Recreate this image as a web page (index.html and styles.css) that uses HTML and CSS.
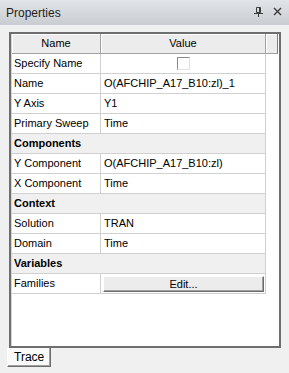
FILE: index.html
```html
<!DOCTYPE html>
<html lang="en">
<head>
  <meta charset="UTF-8" />
  <title>Properties</title>
  <link rel="stylesheet" href="styles.css">
</head>
<body>
  <div class="panel">
    <div class="titlebar">
      <span class="title">Properties</span>
      <div class="title-icons">
        <svg class="pin" width="9" height="10" viewBox="0 0 9 10">
          <path d="M2.5 0.5h4v5h-4z M5.5 0.5v5" fill="none" stroke="#3a3a3a" stroke-width="1"/>
          <path d="M0 6.5h9 M4.5 6.5v3.5" stroke="#3a3a3a" stroke-width="1"/>
        </svg>
        <svg class="close" width="9" height="9" viewBox="0 0 9 9">
          <path d="M1 1L8 8 M8 1L1 8" stroke="#3a3a3a" stroke-width="1.4"/>
        </svg>
      </div>
    </div>

    <div class="frame">
      <div class="grid">
        <div class="head">
          <div class="hcell col-name">Name</div>
          <div class="hcell col-value">Value</div>
          <div class="hcell col-extra"></div>
        </div>

        <div class="row">
          <div class="cell col-name">Specify Name</div>
          <div class="cell col-value center"><span class="checkbox"></span></div>
        </div>
        <div class="row">
          <div class="cell col-name">Name</div>
          <div class="cell col-value">O(AFCHIP_A17_B10:zl)_1</div>
        </div>
        <div class="row">
          <div class="cell col-name">Y Axis</div>
          <div class="cell col-value">Y1</div>
        </div>
        <div class="row">
          <div class="cell col-name">Primary Sweep</div>
          <div class="cell col-value">Time</div>
        </div>
        <div class="row category">
          <div class="cell col-name">Components</div>
          <div class="cell col-value"></div>
        </div>
        <div class="row">
          <div class="cell col-name">Y Component</div>
          <div class="cell col-value">O(AFCHIP_A17_B10:zl)</div>
        </div>
        <div class="row">
          <div class="cell col-name">X Component</div>
          <div class="cell col-value">Time</div>
        </div>
        <div class="row category">
          <div class="cell col-name">Context</div>
          <div class="cell col-value"></div>
        </div>
        <div class="row">
          <div class="cell col-name">Solution</div>
          <div class="cell col-value">TRAN</div>
        </div>
        <div class="row">
          <div class="cell col-name">Domain</div>
          <div class="cell col-value">Time</div>
        </div>
        <div class="row category">
          <div class="cell col-name">Variables</div>
          <div class="cell col-value"></div>
        </div>
        <div class="row">
          <div class="cell col-name">Families</div>
          <div class="cell col-value btn-cell"><button class="edit">Edit...</button></div>
        </div>
      </div>
    </div>

    <div class="tabs">
      <div class="tab">Trace</div>
    </div>
  </div>
</body>
</html>
```

FILE: styles.css
```css
html, body {
  margin: 0;
  padding: 0;
  background: #f0f0f0;
  font-family: 'Liberation Sans', Arial, sans-serif;
  font-size: 11px;
  color: #000;
}

.panel {
  width: 289px;
  height: 373px;
  overflow: hidden;
}

.titlebar {
  height: 25px;
  display: flex;
  align-items: center;
  justify-content: space-between;
  padding: 0 7px 0 6px;
  background: linear-gradient(#e1e4e8, #c9cdd2);
  box-sizing: border-box;
}

.title {
  font-size: 12px;
  color: #1e1e1e;
}

.title-icons {
  display: flex;
  align-items: center;
  gap: 10px;
  margin-top: -2px;
}

.frame {
  margin: 7px 8px 0 9px;
  height: 316px;
  border: 2px solid #6e6e6e;
  background: #fff;
  box-sizing: border-box;
}

.grid {
  height: 100%;
  border-left: 1px solid #d6d6d6;
}

.head {
  display: flex;
  height: 20px;
}

.hcell {
  box-sizing: border-box;
  height: 20px;
  line-height: 19px;
  text-align: center;
  background: #ececec;
  border-right: 1px solid #a0a0a0;
  border-bottom: 1px solid #a0a0a0;
  box-shadow: inset 1px 1px 0 #fff;
}

.head .col-name { width: 89px; }
.head .col-value { width: 165px; }
.head .col-extra { width: 12px; border-right-color: #808080; }

.row {
  display: flex;
  width: 254px;
  height: 20px;
  box-sizing: border-box;
  border-bottom: 1px solid #d0d0d0;
  border-right: 1px solid #d0d0d0;
}

.cell {
  box-sizing: border-box;
  height: 19px;
  line-height: 19px;
  padding-left: 2px;
  white-space: nowrap;
  overflow: hidden;
}

.row .col-name {
  width: 89px;
  border-right: 1px solid #d0d0d0;
}

.row .col-value {
  width: 164px;
  padding-left: 3px;
}

.category {
  background: #f0f0f0;
}

.category .col-name {
  font-weight: bold;
  border-right: none;
}

.center {
  display: flex;
  justify-content: center;
  align-items: center;
}

.checkbox {
  width: 13px;
  height: 13px;
  box-sizing: border-box;
  border-top: 1px solid #8a8a8a;
  border-left: 1px solid #8a8a8a;
  border-right: 1px solid #e2e2e2;
  border-bottom: 1px solid #e2e2e2;
  background: #fff;
  margin-left: -2px;
}

.btn-cell {
  padding: 2px 1px 0 2px !important;
}

.edit {
  display: block;
  width: 161px;
  height: 16px;
  margin: 0;
  padding: 0;
  font: inherit;
  color: #000;
  background: #ececec;
  border: 1px solid;
  border-color: #fff #6b6b6b #6b6b6b #fff;
  box-shadow: inset -1px -1px 0 #a0a0a0;
  line-height: 13px;
}

.tabs {
  display: flex;
  padding-left: 7px;
}

.tab {
  width: 44px;
  height: 19px;
  box-sizing: border-box;
  padding-left: 6px;
  line-height: 18px;
  font-size: 12px;
  background: #fafafa;
  border-left: 1px solid #fff;
  border-right: 1px solid #6e6e6e;
  border-bottom: 1px solid #6e6e6e;
  box-shadow: inset -1px -1px 0 #a0a0a0;
}
```
